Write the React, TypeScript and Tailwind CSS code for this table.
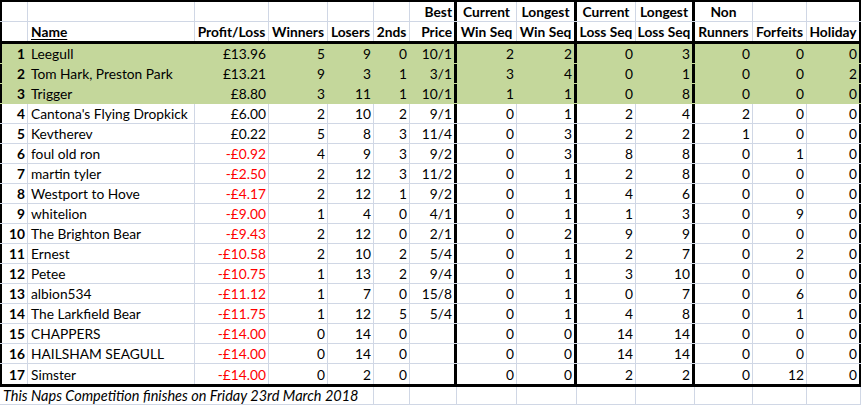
import React from "react";

type Row = {
  rank: number;
  name: string;
  pl: string;
  winners: number;
  losers: number;
  seconds: number;
  price: string;
  curWin: number;
  longWin: number;
  curLoss: number;
  longLoss: number;
  nonRunners: number;
  forfeits: number;
  holiday: number;
};

const rows: Row[] = [
  { rank: 1, name: "Leegull", pl: "£13.96", winners: 5, losers: 9, seconds: 0, price: "10/1", curWin: 2, longWin: 2, curLoss: 0, longLoss: 3, nonRunners: 0, forfeits: 0, holiday: 0 },
  { rank: 2, name: "Tom Hark, Preston Park", pl: "£13.21", winners: 9, losers: 3, seconds: 1, price: "3/1", curWin: 3, longWin: 4, curLoss: 0, longLoss: 1, nonRunners: 0, forfeits: 0, holiday: 2 },
  { rank: 3, name: "Trigger", pl: "£8.80", winners: 3, losers: 11, seconds: 1, price: "10/1", curWin: 1, longWin: 1, curLoss: 0, longLoss: 8, nonRunners: 0, forfeits: 0, holiday: 0 },
  { rank: 4, name: "Cantona's Flying Dropkick", pl: "£6.00", winners: 2, losers: 10, seconds: 2, price: "9/1", curWin: 0, longWin: 1, curLoss: 2, longLoss: 4, nonRunners: 2, forfeits: 0, holiday: 0 },
  { rank: 5, name: "Kevtherev", pl: "£0.22", winners: 5, losers: 8, seconds: 3, price: "11/4", curWin: 0, longWin: 3, curLoss: 2, longLoss: 2, nonRunners: 1, forfeits: 0, holiday: 0 },
  { rank: 6, name: "foul old ron", pl: "-£0.92", winners: 4, losers: 9, seconds: 3, price: "9/2", curWin: 0, longWin: 3, curLoss: 8, longLoss: 8, nonRunners: 0, forfeits: 1, holiday: 0 },
  { rank: 7, name: "martin tyler", pl: "-£2.50", winners: 2, losers: 12, seconds: 3, price: "11/2", curWin: 0, longWin: 1, curLoss: 2, longLoss: 8, nonRunners: 0, forfeits: 0, holiday: 0 },
  { rank: 8, name: "Westport to Hove", pl: "-£4.17", winners: 2, losers: 12, seconds: 1, price: "9/2", curWin: 0, longWin: 1, curLoss: 4, longLoss: 6, nonRunners: 0, forfeits: 0, holiday: 0 },
  { rank: 9, name: "whitelion", pl: "-£9.00", winners: 1, losers: 4, seconds: 0, price: "4/1", curWin: 0, longWin: 1, curLoss: 1, longLoss: 3, nonRunners: 0, forfeits: 9, holiday: 0 },
  { rank: 10, name: "The Brighton Bear", pl: "-£9.43", winners: 2, losers: 12, seconds: 0, price: "2/1", curWin: 0, longWin: 2, curLoss: 9, longLoss: 9, nonRunners: 0, forfeits: 0, holiday: 0 },
  { rank: 11, name: "Ernest", pl: "-£10.58", winners: 2, losers: 10, seconds: 2, price: "5/4", curWin: 0, longWin: 1, curLoss: 2, longLoss: 7, nonRunners: 0, forfeits: 2, holiday: 0 },
  { rank: 12, name: "Petee", pl: "-£10.75", winners: 1, losers: 13, seconds: 2, price: "9/4", curWin: 0, longWin: 1, curLoss: 3, longLoss: 10, nonRunners: 0, forfeits: 0, holiday: 0 },
  { rank: 13, name: "albion534", pl: "-£11.12", winners: 1, losers: 7, seconds: 0, price: "15/8", curWin: 0, longWin: 1, curLoss: 0, longLoss: 7, nonRunners: 0, forfeits: 6, holiday: 0 },
  { rank: 14, name: "The Larkfield Bear", pl: "-£11.75", winners: 1, losers: 12, seconds: 5, price: "5/4", curWin: 0, longWin: 1, curLoss: 4, longLoss: 8, nonRunners: 0, forfeits: 1, holiday: 0 },
  { rank: 15, name: "CHAPPERS", pl: "-£14.00", winners: 0, losers: 14, seconds: 0, price: "", curWin: 0, longWin: 0, curLoss: 14, longLoss: 14, nonRunners: 0, forfeits: 0, holiday: 0 },
  { rank: 16, name: "HAILSHAM SEAGULL", pl: "-£14.00", winners: 0, losers: 14, seconds: 0, price: "", curWin: 0, longWin: 0, curLoss: 14, longLoss: 14, nonRunners: 0, forfeits: 0, holiday: 0 },
  { rank: 17, name: "Simster", pl: "-£14.00", winners: 0, losers: 2, seconds: 0, price: "", curWin: 0, longWin: 0, curLoss: 2, longLoss: 2, nonRunners: 0, forfeits: 12, holiday: 0 },
];

// column widths, each including its right border
const widths = [
  "w-[28px]", "w-[167px]", "w-[74px]", "w-[59px]", "w-[46px]", "w-[36px]", "w-[47px]",
  "w-[60px]", "w-[60px]", "w-[59px]", "w-[59px]", "w-[58px]", "w-[54px]", "w-[54px]",
];

function edge(i: number, green: boolean, boxed: boolean) {
  if (boxed && (i === 6 || i === 8 || i === 10)) return "border-r-[3px] border-r-black";
  if (boxed && i === 13) return "border-r-2 border-r-black";
  return green ? "border-r border-r-[#c4d79b]" : "border-r border-r-[#d0d7e5]";
}

function Cell({
  i,
  green = false,
  boxed = true,
  align = "right",
  className = "",
  children,
}: {
  i: number;
  green?: boolean;
  boxed?: boolean;
  align?: "left" | "right" | "center";
  className?: string;
  children?: React.ReactNode;
}) {
  const justify = align === "left" ? "justify-start pl-[3px]" : align === "center" ? "justify-center" : "justify-end pr-[2px]";
  return (
    <div
      className={`${widths[i]} ${edge(i, green, boxed)} ${i === 0 && boxed ? "border-l-2 border-l-black" : ""} h-full shrink-0 flex items-end pb-[2px] leading-[15px] whitespace-nowrap overflow-visible ${justify} ${className}`}
    >
      {children}
    </div>
  );
}

export default function App() {
  return (
    <div className="w-[861px] h-[406px] bg-white text-black text-[13.75px] font-['Lato','Open_Sans',sans-serif] overflow-hidden">
      {/* header row 1 */}
      <div className="flex h-[22px] border-t-2 border-t-black border-b border-b-[#d0d7e5]">
        <Cell i={0} />
        <Cell i={1} />
        <Cell i={2} />
        <Cell i={3} />
        <Cell i={4} />
        <Cell i={5} />
        <Cell i={6} className="font-bold">Best</Cell>
        <Cell i={7} align="center" className="font-bold">Current</Cell>
        <Cell i={8} align="center" className="font-bold">Longest</Cell>
        <Cell i={9} align="center" className="font-bold">Current</Cell>
        <Cell i={10} align="center" className="font-bold">Longest</Cell>
        <Cell i={11} align="center" className="font-bold">Non</Cell>
        <Cell i={12} />
        <Cell i={13} />
      </div>

      {/* header row 2 */}
      <div className="flex h-[22px] border-b-[3px] border-b-black font-bold">
        <Cell i={0} />
        <Cell i={1} align="left"><span className="underline underline-offset-2">Name</span></Cell>
        <Cell i={2} align="center">Profit/Loss</Cell>
        <Cell i={3} align="center">Winners</Cell>
        <Cell i={4} align="center">Losers</Cell>
        <Cell i={5} align="center">2nds</Cell>
        <Cell i={6}>Price</Cell>
        <Cell i={7} align="center">Win Seq</Cell>
        <Cell i={8} align="center">Win Seq</Cell>
        <Cell i={9} align="center">Loss Seq</Cell>
        <Cell i={10} align="center">Loss Seq</Cell>
        <Cell i={11} align="center">Runners</Cell>
        <Cell i={12} align="center">Forfeits</Cell>
        <Cell i={13} align="center">Holiday</Cell>
      </div>

      {rows.map((r) => {
        const green = r.rank <= 3;
        const last = r.rank === 17;
        const rowCls = last
          ? "h-[23px] border-b-[3px] border-b-black"
          : green
          ? "h-[20px] border-b border-b-[#c4d79b] bg-[#c4d79b]"
          : "h-[20px] border-b border-b-[#d0d7e5]";
        const red = r.pl.startsWith("-");
        return (
          <div key={r.rank} className={`flex ${rowCls}`}>
            <Cell i={0} green={green} className="font-bold">{r.rank}</Cell>
            <Cell i={1} green={green} align="left">{r.name}</Cell>
            <Cell i={2} green={green} className={red ? "text-[#ff0000]" : ""}>{r.pl}</Cell>
            <Cell i={3} green={green}>{r.winners}</Cell>
            <Cell i={4} green={green}>{r.losers}</Cell>
            <Cell i={5} green={green}>{r.seconds}</Cell>
            <Cell i={6} green={green}>{r.price}</Cell>
            <Cell i={7} green={green}>{r.curWin}</Cell>
            <Cell i={8} green={green}>{r.longWin}</Cell>
            <Cell i={9} green={green}>{r.curLoss}</Cell>
            <Cell i={10} green={green}>{r.longLoss}</Cell>
            <Cell i={11} green={green}>{r.nonRunners}</Cell>
            <Cell i={12} green={green}>{r.forfeits}</Cell>
            <Cell i={13} green={green}>{r.holiday}</Cell>
          </div>
        );
      })}

      {/* footer note */}
      <div className="flex h-[18px] border-b border-b-[#d0d7e5]">
        <div className="w-[374px] h-full shrink-0 border-r border-r-[#d0d7e5] flex items-end pb-[1px] pl-[3px] leading-[15px] italic text-[14.5px] whitespace-nowrap">
          This Naps Competition finishes on Friday 23rd March 2018
        </div>
        <Cell i={5} boxed={false} />
        <Cell i={6} boxed={false} />
        <Cell i={7} boxed={false} />
        <Cell i={8} boxed={false} />
        <Cell i={9} boxed={false} />
        <Cell i={10} boxed={false} />
        <Cell i={11} boxed={false} />
        <Cell i={12} boxed={false} />
        <Cell i={13} boxed={false} />
      </div>
    </div>
  );
}
